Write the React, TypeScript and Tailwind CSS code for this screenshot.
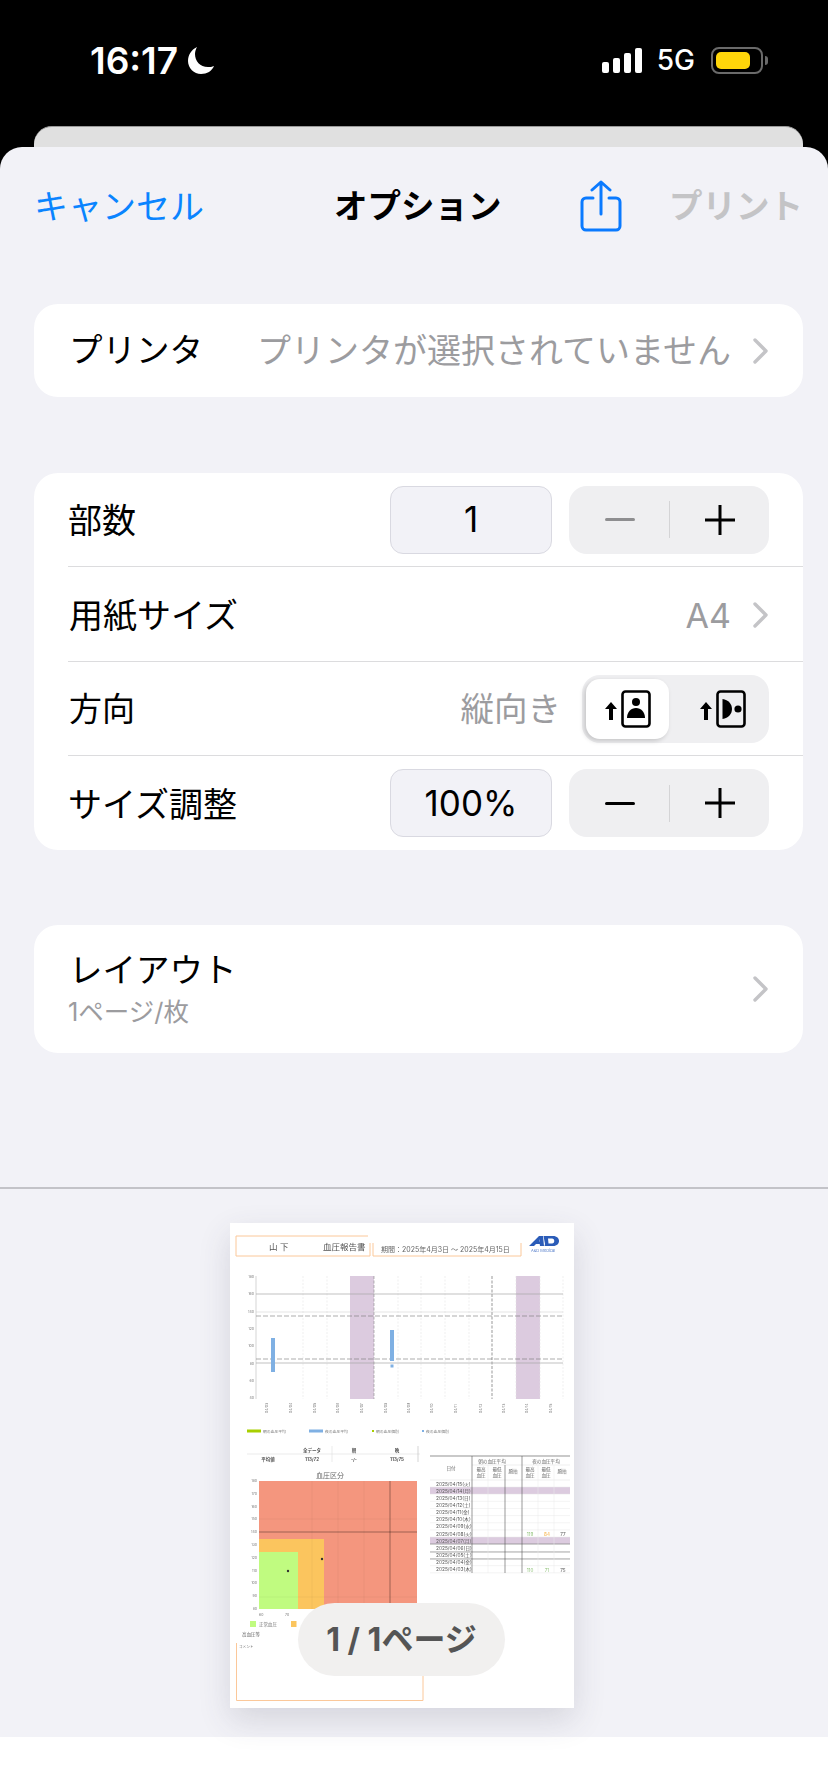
import React from 'react';

const Chevron: React.FC = () => (
  <svg width="18" height="28" viewBox="0 0 18 28" fill="none" className="shrink-0">
    <path d="M3 3l11 11L3 25" stroke="#c4c4c7" strokeWidth="3.4" strokeLinecap="round" strokeLinejoin="round" />
  </svg>
);

const Stepper: React.FC<{ dimMinus?: boolean }> = ({ dimMinus }) => (
  <div className="w-[200px] h-[68px] rounded-[18px] bg-[#efeff1] flex items-center">
    <div className="w-[100px] flex justify-center pl-[2px]">
      <div className={`w-[30px] h-[3px] rounded-full ${dimMinus ? 'bg-[#8e8e90]' : 'bg-black'}`}></div>
    </div>
    <div className="w-[1px] h-[37px] bg-[#d4d4d6]"></div>
    <div className="w-[99px] flex justify-center pl-[1px]">
      <svg width="30" height="30" viewBox="0 0 30 30">
        <path d="M0 15h30M15 0v30" stroke="#000" strokeWidth="3" strokeLinecap="round" />
      </svg>
    </div>
  </div>
);

const ValueField: React.FC<{ value: string }> = ({ value }) => (
  <div className="w-[162px] h-[68px] rounded-[13px] bg-[#f2f2f7] border border-[#d9d9e1] flex items-center justify-center text-[35px] text-black">
    {value}
  </div>
);

const OrientationIcon: React.FC<{ landscape?: boolean }> = ({ landscape }) => (
  <svg width="46" height="38" viewBox="0 0 46 38">
    <path d="M6 12l6 7H8v11H4V19H0z" fill="#000" />
    <rect x="17.5" y="1.5" width="27" height="35" rx="3" fill="none" stroke="#000" strokeWidth="2.6" />
    {landscape ? (
      <>
        <path d="M22.5 9c6 1 9.5 5 9.5 10s-3.5 9-9.5 10z" fill="#000" />
        <circle cx="38" cy="19" r="3.6" fill="#000" />
      </>
    ) : (
      <>
        <circle cx="31" cy="12" r="4" fill="#000" />
        <path d="M22 28c0-6 4-10 9-10s9 4 9 10z" fill="#000" />
      </>
    )}
  </svg>
);

const days = ['15(火)', '14(月)', '13(日)', '12(土)', '11(金)', '10(木)', '09(水)', '08(火)', '07(月)', '06(日)', '05(土)', '04(金)', '03(木)'];
const chartLabels = ['04/03', '04/04', '04/05', '04/06', '04/07', '04/08', '04/09', '04/10', '04/11', '04/12', '04/13', '04/14', '04/15'];
const chartX = [38, 62, 86, 109, 133, 157, 180, 203, 227, 252, 275, 298, 322];
const yLabels: [string, number][] = [['180', 54], ['160', 71], ['140', 89], ['120', 106], ['100', 123], ['80', 141], ['60', 158], ['40', 175]];
const zoneLabels = ['180', '170', '160', '150', '140', '130', '120', '110', '100', '90', '80'];

// 用紙のサムネイル (縮小された報告書の図)
const ReportThumbnail: React.FC = () => (
  <svg width="344" height="485" viewBox="0 0 344 485" className="block blur-[0.6px]">
    <rect width="344" height="485" fill="#fff" />

    <path d="M6 33V13h132M6 33h134V20M143 20v13h148M291 20v13" fill="none" stroke="#fbc89a" strokeWidth="1" />
    <text x="39" y="26.5" fontSize="8.5" fill="#555">山 下</text>
    <text x="93" y="26.5" fontSize="8.5" fill="#555">血圧報告書</text>
    <text x="151" y="29" fontSize="7" fill="#666">期間：2025年4月3日 〜 2025年4月15日</text>
    <path fillRule="evenodd" d="M299 23l10-10h4l1 10h-4l-.3-2h-3.700l-2 2zM309 18.500h.5l-.2-2.500z" fill="#2b5cb8" />
    <path fillRule="evenodd" d="M313.500 13H323c8 0 8 10 0 10h-8.500l.5-2zM318 15.500l.5 5h3.500c3 0 3-5 0-5z" fill="#2b5cb8" />
    <text x="301" y="29" fontSize="4" fill="#5b82cc">A&amp;D Medical</text>

    <rect x="120" y="53" width="24" height="123" fill="#dccbdf" />
    <rect x="286" y="53" width="24" height="123" fill="#dccbdf" />
    {[73, 97, 168, 191, 215, 239, 286, 310, 333].map((x) => (
      <line key={x} x1={x} y1="53" x2={x} y2="176" stroke="#e4e4e4" strokeWidth="0.6" strokeDasharray="2 1.5" />
    ))}
    <line x1="144" y1="53" x2="144" y2="176" stroke="#888" strokeWidth="0.6" strokeDasharray="3 1.5" />
    <line x1="262" y1="53" x2="262" y2="176" stroke="#555" strokeWidth="0.6" strokeDasharray="3 1.5" />
    <line x1="26" y1="53" x2="26" y2="176" stroke="#bbb" strokeWidth="0.6" />
    <line x1="26" y1="71" x2="333" y2="71" stroke="#a8a8a8" strokeWidth="0.7" />
    <line x1="26" y1="89" x2="333" y2="89" stroke="#c8c8c8" strokeWidth="0.5" />
    <line x1="26" y1="93" x2="333" y2="93" stroke="#777" strokeWidth="0.6" strokeDasharray="5 2" />
    <line x1="26" y1="136" x2="333" y2="136" stroke="#777" strokeWidth="0.6" strokeDasharray="5 2" />
    <line x1="26" y1="140" x2="333" y2="140" stroke="#a8a8a8" strokeWidth="0.7" />
    <rect x="41" y="115" width="4" height="34" fill="#7fb0e3" />
    <rect x="160" y="107" width="4" height="31" fill="#7fb0e3" />
    <rect x="160.5" y="141.5" width="3" height="3" fill="#7fb0e3" />
    {yLabels.map(([t, y]) => (
      <text key={t} x="24" y={y + 1} fontSize="3.5" fill="#777" textAnchor="end">{t}</text>
    ))}
    {chartLabels.map((t, i) => (
      <text key={t} x={chartX[i]} y="190" fontSize="3.5" fill="#777" transform={`rotate(-90 ${chartX[i]} 190)`}>{t}</text>
    ))}

    <rect x="17" y="206.5" width="14" height="3" fill="#a8cf00" />
    <text x="33" y="209.5" fontSize="3.8" fill="#777">朝の血圧平均</text>
    <rect x="79" y="206.5" width="14" height="3" fill="#7fb0e3" />
    <text x="95" y="209.5" fontSize="3.8" fill="#777">夜の血圧平均</text>
    <rect x="142" y="207" width="2" height="2" fill="#a8cf00" />
    <text x="146" y="209.5" fontSize="3.8" fill="#777">朝の血圧個別</text>
    <rect x="192" y="207" width="2" height="2" fill="#7fb0e3" />
    <text x="196" y="209.5" fontSize="3.8" fill="#777">夜の血圧個別</text>

    <line x1="17" y1="231" x2="190" y2="231" stroke="#ddd" strokeWidth="0.6" />
    <line x1="102" y1="223" x2="102" y2="239" stroke="#ddd" strokeWidth="0.6" />
    <line x1="188" y1="223" x2="188" y2="239" stroke="#bbb" strokeWidth="0.6" />
    <g fontSize="4.5" fill="#555" fontWeight="700" textAnchor="middle">
      <text x="82" y="229">全データ</text>
      <text x="124" y="229">朝</text>
      <text x="167" y="229">晩</text>
      <text x="38" y="238">平均値</text>
      <text x="82" y="238">113/72</text>
      <text x="124" y="238">-/-</text>
      <text x="167" y="238">113/75</text>
    </g>

    <text x="100" y="255" fontSize="7" fill="#666" textAnchor="middle">血圧区分</text>
    <rect x="29" y="258" width="158" height="128" fill="#f4967e" />
    <rect x="29" y="316" width="65" height="70" fill="#fbc55e" />
    <rect x="29" y="329" width="39" height="57" fill="#c0fb80" />
    <path d="M29 296h158M29 374h158M82 258v128M108 258v128M134 258v128" stroke="#000" strokeOpacity="0.07" strokeWidth="0.6" />
    <path d="M29 309h158M160 258v128" stroke="#000" strokeOpacity="0.45" strokeWidth="0.8" />
    <circle cx="58" cy="348" r="1.2" fill="#333" />
    <circle cx="92" cy="336" r="1.2" fill="#333" />
    {zoneLabels.map((t, i) => (
      <text key={t} x="27" y={259 + i * 12.8} fontSize="3.5" fill="#777" textAnchor="end">{t}</text>
    ))}
    <text x="29" y="393" fontSize="3.5" fill="#777">60</text>
    <text x="55" y="393" fontSize="3.5" fill="#777">70</text>
    <rect x="20" y="398" width="6" height="6" fill="#c0fb80" />
    <text x="29" y="403" fontSize="4.5" fill="#777">正常血圧</text>
    <rect x="61" y="398" width="5.5" height="6" fill="#fbc55e" />
    <text x="12" y="413" fontSize="4.5" fill="#666">高血圧等</text>
    <path d="M6.5 420v57.5h186.5V420" fill="none" stroke="#fbc89a" strokeWidth="1" />
    <text x="9" y="425" fontSize="3.6" fill="#777">コメント</text>

    <rect x="200" y="264" width="140" height="7" fill="#dccbdf" />
    <rect x="200" y="314" width="140" height="7" fill="#dccbdf" />
    {days.map((d, i) => (
      <g key={d}>
        <text x="206" y={262.5 + i * 7.15} fontSize="4.8" fill="#555">2025/04/{d}</text>
        <line x1="200" y1={264 + i * 7.15} x2="340" y2={264 + i * 7.15} stroke="#e8e8e8" strokeWidth="0.5" />
      </g>
    ))}
    <path d="M200 233h140" stroke="#666" strokeWidth="0.7" />
    <path d="M200 257h140M242 242h98" stroke="#ddd" strokeWidth="0.5" />
    <path d="M200 321h140M200 329h140M200 336h140" stroke="#555" strokeWidth="0.5" />
    <path d="M258 242v108M308 242v108M324 242v108" stroke="#e8e8e8" strokeWidth="0.5" />
    <path d="M242 233v117M275 242v108M292 233v117" stroke="#555" strokeWidth="0.6" />
    <g fontSize="4.6" fill="#666" textAnchor="middle">
      <text x="221" y="247">日付</text>
      <text x="262" y="239.5">朝の血圧平均</text>
      <text x="316" y="239.5">夜の血圧平均</text>
      <text x="251" y="248">最高</text>
      <text x="251" y="254">血圧</text>
      <text x="267" y="248">最低</text>
      <text x="267" y="254">血圧</text>
      <text x="283" y="250">脈拍</text>
      <text x="300" y="248">最高</text>
      <text x="300" y="254">血圧</text>
      <text x="316" y="248">最低</text>
      <text x="316" y="254">血圧</text>
      <text x="332" y="250">脈拍</text>
    </g>
    <g fontSize="4.6" textAnchor="middle">
      <text x="300" y="313" fill="#93c47d">119</text>
      <text x="317" y="313" fill="#f5b041">84</text>
      <text x="333" y="313" fill="#555">77</text>
      <text x="300" y="349" fill="#93c47d">110</text>
      <text x="317" y="349" fill="#93c47d">71</text>
      <text x="333" y="349" fill="#555">75</text>
    </g>
  </svg>
);

const App: React.FC = () => {
  return (
    <div className="w-[828px] h-[1792px] bg-black flex flex-col overflow-hidden font-['Inter','Noto_Sans_CJK_JP',sans-serif]">
      {/* Status bar */}
      <div className="h-[126px] shrink-0 flex items-start justify-between pt-[41px] pl-[90px] pr-[60px] text-white">
        <div className="flex items-center gap-[8px] h-[38px]">
          <span className="text-[37px] font-semibold leading-none">16:17</span>
          <svg width="29" height="29" viewBox="0 0 29 29">
            <path d="M11 1C5 4 2 9 2 15c0 7 6 13 13 13 6 0 11-3 13-8-2 1-4 1-6 1-8 0-13-6-13-13 0-3 1-5 2-7z" fill="#fff" />
          </svg>
        </div>
        <div className="flex items-center h-[38px]">
          <div className="flex items-end gap-[4px] h-[25px] mr-[15px]">
            <div className="w-[7px] h-[11px] rounded-[2px] bg-white"></div>
            <div className="w-[7px] h-[15px] rounded-[2px] bg-white"></div>
            <div className="w-[7px] h-[20px] rounded-[2px] bg-white"></div>
            <div className="w-[7px] h-[25px] rounded-[2px] bg-white"></div>
          </div>
          <span className="text-[28px] font-medium leading-none mr-[16px]">5G</span>
          <div className="w-[52px] h-[27px] rounded-[8px] border-[2px] border-[#6a6a6a] p-[3px]">
            <div className="w-[34px] h-full rounded-[5px] bg-[#ffd60a]"></div>
          </div>
          <div className="w-[3px] h-[9px] ml-[2px] rounded-r-full bg-[#6a6a6a]"></div>
        </div>
      </div>

      {/* Card behind the sheet */}
      <div className="h-[21px] shrink-0 ml-[34px] mr-[25px] rounded-t-[18px] bg-[#e0e0e0] border-t border-[#9a9a9a]"></div>

      {/* Sheet */}
      <div className="flex-1 flex flex-col rounded-t-[22px] bg-[#f2f2f7] min-h-0">
        <div className="h-[118px] mb-[2px] shrink-0 flex items-center pl-[34px]">
          <span className="text-[34px] text-[#0a84ff] w-[170px] whitespace-nowrap">キャンセル</span>
          <span className="text-[33.5px] font-bold text-black ml-[130px] w-[170px] whitespace-nowrap">オプション</span>
          <svg width="42" height="52" viewBox="0 0 42 52" fill="none" className="ml-[76px]">
            <path d="M13 18H6a4 4 0 0 0-4 4v24a4 4 0 0 0 4 4h30a4 4 0 0 0 4-4V22a4 4 0 0 0-4-4h-7" stroke="#0a7aff" strokeWidth="3" strokeLinecap="round" />
            <path d="M21 34V2M12 10l9-8 9 8" stroke="#0a7aff" strokeWidth="3" strokeLinecap="round" strokeLinejoin="round" />
          </svg>
          <span className="text-[33.5px] font-bold text-[#c4c4c6] ml-[47px] whitespace-nowrap">プリント</span>
        </div>

        {/* Printer */}
        <div className="mt-[37px] ml-[34px] mr-[25px] h-[93px] shrink-0 rounded-[24px] bg-white flex items-center pl-[35px] pr-[33px]">
          <span className="text-[33.5px] text-black">プリンタ</span>
          <span className="ml-auto text-[34px] text-[#9c9c9f] whitespace-nowrap">プリンタが選択されていません</span>
          <div className="ml-[21px]"><Chevron /></div>
        </div>

        {/* Options */}
        <div className="mt-[76px] ml-[34px] mr-[25px] shrink-0 rounded-[24px] bg-white flex flex-col">
          <div className="h-[93px] flex items-center pl-[34px] pr-[34px] pt-[2px]">
            <span className="text-[34px] text-black">部数</span>
            <div className="ml-auto -mt-[2px]"><ValueField value="1" /></div>
            <div className="ml-[17px] -mt-[2px]"><Stepper dimMinus /></div>
          </div>
          <div className="ml-[34px] h-[1px] bg-[#dcdcde]"></div>
          <div className="h-[94px] flex items-center pl-[35px] pr-[33px] pt-[2px]">
            <span className="text-[34px] text-black">用紙サイズ</span>
            <span className="ml-auto text-[34px] text-[#9c9c9f]">A4</span>
            <div className="ml-[21px]"><Chevron /></div>
          </div>
          <div className="ml-[34px] h-[1px] bg-[#dcdcde]"></div>
          <div className="h-[93px] flex items-center pl-[35px] pr-[34px] pt-[2px]">
            <span className="text-[33px] text-black">方向</span>
            <span className="ml-auto text-[33.5px] text-[#9c9c9f]">縦向き</span>
            <div className="ml-[21px] -mt-[2px] w-[187px] h-[68px] rounded-[18px] bg-[#efeff1] flex items-center p-[4px]">
              <div className="w-[83px] h-[60px] rounded-[14px] bg-white shadow-[-2px_2px_5px_rgba(0,0,0,0.18)] flex items-center justify-center">
                <OrientationIcon />
              </div>
              <div className="flex-1 flex items-center justify-center pl-[12px]">
                <OrientationIcon landscape />
              </div>
            </div>
          </div>
          <div className="ml-[34px] h-[1px] bg-[#dcdcde]"></div>
          <div className="h-[94px] flex items-center pl-[34px] pr-[34px] pt-[2px]">
            <span className="text-[34px] text-black">サイズ調整</span>
            <div className="ml-auto -mt-[2px]"><ValueField value="100%" /></div>
            <div className="ml-[17px] -mt-[2px]"><Stepper /></div>
          </div>
        </div>

        {/* Layout */}
        <div className="mt-[75px] ml-[34px] mr-[25px] h-[128px] shrink-0 rounded-[24px] bg-white flex items-center pl-[35px] pr-[33px]">
          <div className="flex flex-col">
            <span className="text-[33.5px] leading-[44px] text-black">レイアウト</span>
            <span className="text-[25.5px] leading-[38px] text-[#9c9c9f] -ml-[1px] mt-[1px]">1ページ/枚</span>
          </div>
          <div className="ml-auto"><Chevron /></div>
        </div>

        {/* Preview */}
        <div className="mt-[134px] flex-1 min-h-0 border-t-[2px] border-[#c3c3c8] flex justify-center pt-[34px] pr-[24px]">
          <div className="relative w-[344px] h-[485px] shadow-[0_12px_30px_rgba(60,60,90,0.16)]">
            <ReportThumbnail />
            <div className="absolute left-[68px] top-[380px] w-[207px] h-[73px] rounded-full bg-[#f1f0ef] flex items-center justify-center text-[32px] font-bold text-[#555] whitespace-nowrap">
              1 / 1ページ
            </div>
          </div>
        </div>
      </div>

      {/* Bottom strip */}
      <div className="h-[55px] shrink-0 bg-white"></div>
    </div>
  );
};

export default App;
